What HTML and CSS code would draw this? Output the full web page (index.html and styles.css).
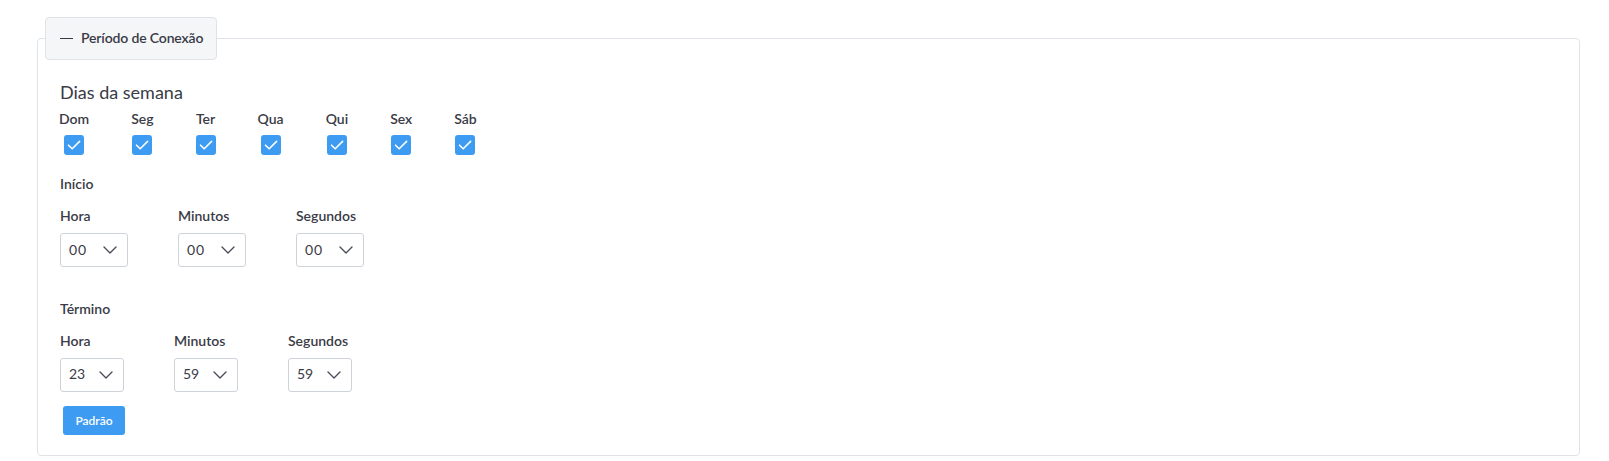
FILE: index.html
```html
<!DOCTYPE html>
<html lang="pt-BR">
<head>
<meta charset="utf-8">
<title>Período de Conexão</title>
<link rel="stylesheet" href="styles.css">
</head>
<body>
<div class="page">
  <fieldset class="panel">
    <legend class="panel-legend"><span class="dash"></span>Período de Conexão</legend>
    <div class="panel-body">
      <h3 class="week-title">Dias da semana</h3>
      <div class="days">
        <label class="day"><span class="day-name">Dom</span><span class="check"><svg viewBox="0 0 20 20"><path d="M4.5 10.2 L8.2 13.8 L15.6 6.4"/></svg></span></label>
        <label class="day"><span class="day-name">Seg</span><span class="check"><svg viewBox="0 0 20 20"><path d="M4.5 10.2 L8.2 13.8 L15.6 6.4"/></svg></span></label>
        <label class="day"><span class="day-name">Ter</span><span class="check"><svg viewBox="0 0 20 20"><path d="M4.5 10.2 L8.2 13.8 L15.6 6.4"/></svg></span></label>
        <label class="day"><span class="day-name">Qua</span><span class="check"><svg viewBox="0 0 20 20"><path d="M4.5 10.2 L8.2 13.8 L15.6 6.4"/></svg></span></label>
        <label class="day"><span class="day-name">Qui</span><span class="check"><svg viewBox="0 0 20 20"><path d="M4.5 10.2 L8.2 13.8 L15.6 6.4"/></svg></span></label>
        <label class="day"><span class="day-name">Sex</span><span class="check"><svg viewBox="0 0 20 20"><path d="M4.5 10.2 L8.2 13.8 L15.6 6.4"/></svg></span></label>
        <label class="day"><span class="day-name">Sáb</span><span class="check"><svg viewBox="0 0 20 20"><path d="M4.5 10.2 L8.2 13.8 L15.6 6.4"/></svg></span></label>
      </div>

      <div class="section-title start">Início</div>
      <div class="time-row">
        <div class="field">
          <div class="field-label">Hora</div>
          <div class="select wide"><span class="val zero">00</span><svg class="chev" viewBox="0 0 14 8"><path d="M1 1 L7 7 L13 1"/></svg></div>
        </div>
        <div class="field">
          <div class="field-label">Minutos</div>
          <div class="select wide"><span class="val zero">00</span><svg class="chev" viewBox="0 0 14 8"><path d="M1 1 L7 7 L13 1"/></svg></div>
        </div>
        <div class="field">
          <div class="field-label">Segundos</div>
          <div class="select wide"><span class="val zero">00</span><svg class="chev" viewBox="0 0 14 8"><path d="M1 1 L7 7 L13 1"/></svg></div>
        </div>
      </div>

      <div class="section-title end">Término</div>
      <div class="time-row">
        <div class="field">
          <div class="field-label">Hora</div>
          <div class="select narrow"><span class="val">23</span><svg class="chev" viewBox="0 0 14 8"><path d="M1 1 L7 7 L13 1"/></svg></div>
        </div>
        <div class="field">
          <div class="field-label">Minutos</div>
          <div class="select narrow"><span class="val">59</span><svg class="chev" viewBox="0 0 14 8"><path d="M1 1 L7 7 L13 1"/></svg></div>
        </div>
        <div class="field">
          <div class="field-label">Segundos</div>
          <div class="select narrow"><span class="val">59</span><svg class="chev" viewBox="0 0 14 8"><path d="M1 1 L7 7 L13 1"/></svg></div>
        </div>
      </div>

      <button class="btn" type="button">Padrão</button>
    </div>
  </fieldset>
</div>
</body>
</html>
```
FILE: styles.css
```css
* { box-sizing: border-box; }
html, body {
  margin: 0;
  padding: 0;
  background: #ffffff;
}
body {
  font-family: Lato, "Open Sans", "Liberation Sans", sans-serif;
  color: #3a3b46;
}
.page {
  padding: 17px 29px 0 37px;
}
.panel {
  margin: 0;
  border: 1px solid #dfe2e6;
  border-radius: 4px;
  padding: 0 0 20px 7px;
  min-width: 0;
}
.panel-legend {
  display: flex;
  align-items: center;
  gap: 8px;
  height: 43px;
  padding: 0 13px 0 14px;
  background: #f5f6f8;
  border: 1px solid #dfe2e6;
  border-radius: 4px;
  font-size: 14px;
  font-weight: 600;
  letter-spacing: -0.15px;
  line-height: 1.2;
  color: #3a3b46;
}
.dash {
  display: block;
  width: 13px;
  height: 1.6px;
  background: #3a3b46;
}
.panel-body {
  padding: 22px 0 0 15px;
}
.week-title {
  margin: 0;
  font-size: 18px;
  font-weight: 400;
  line-height: 1.2;
}
.days {
  display: flex;
  gap: 42px;
  margin-top: 7px;
  margin-left: -1px;
}
.day {
  display: flex;
  flex-direction: column;
  align-items: center;
}
.day-name {
  font-size: 14px;
  font-weight: 600;
  line-height: 1.2;
}
.check {
  display: block;
  width: 20px;
  height: 20px;
  margin-top: 8px;
  background: #3d9bf2;
  border-radius: 3px;
}
.check svg {
  display: block;
  width: 20px;
  height: 20px;
}
.check path {
  fill: none;
  stroke: #ffffff;
  stroke-width: 1.6;
  stroke-linecap: round;
  stroke-linejoin: round;
}
.section-title {
  font-size: 14px;
  font-weight: 600;
  line-height: 1.2;
}
.section-title.start { margin-top: 21px; }
.section-title.end { margin-top: 34px; }
.time-row {
  display: flex;
  gap: 50px;
  margin-top: 15px;
}
.field {
  display: flex;
  flex-direction: column;
  align-items: flex-start;
}
.field-label {
  font-size: 14px;
  font-weight: 600;
  line-height: 1.2;
}
.select {
  display: flex;
  align-items: center;
  justify-content: space-between;
  height: 34px;
  margin-top: 8px;
  padding: 0 10px 0 8px;
  border: 1px solid #ced3d9;
  border-radius: 3px;
  background: #ffffff;
  font-size: 14px;
  color: #3a3b46;
}
.select.wide { width: 68px; }
.select.narrow { width: 64px; }
.val {
  line-height: 1.2;
}
.val.zero {
  letter-spacing: 1px;
}
.chev {
  display: block;
  width: 14px;
  height: 8px;
}
.chev path {
  fill: none;
  stroke: #4a4e5a;
  stroke-width: 1.4;
  stroke-linecap: round;
  stroke-linejoin: round;
}
.btn {
  display: block;
  margin: 14px 0 0 3px;
  width: 62px;
  height: 29px;
  padding: 0;
  border: 0;
  border-radius: 3px;
  background: #3d9bf2;
  color: #ffffff;
  font-family: Lato, "Open Sans", "Liberation Sans", sans-serif;
  font-size: 12px;
  font-weight: 600;
}
```
